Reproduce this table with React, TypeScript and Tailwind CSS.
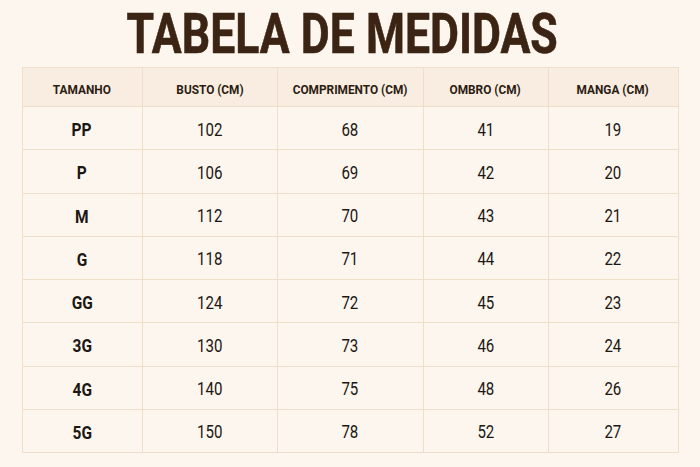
import React from "react";

const rows = [
  ["PP", "102", "68", "41", "19"],
  ["P", "106", "69", "42", "20"],
  ["M", "112", "70", "43", "21"],
  ["G", "118", "71", "44", "22"],
  ["GG", "124", "72", "45", "23"],
  ["3G", "130", "73", "46", "24"],
  ["4G", "140", "75", "48", "26"],
  ["5G", "150", "78", "52", "27"],
];

const heads = ["TAMANHO", "BUSTO (CM)", "COMPRIMENTO (CM)", "OMBRO (CM)", "MANGA (CM)"];

export default function App() {
  return (
    <div
      className="w-[700px] h-[467px] bg-[#fcf6ee] flex flex-col items-center overflow-hidden"
      style={{ fontFamily: 'Roboto, "Liberation Sans", sans-serif' }}
    >
      <div className="h-[67px] pt-[4px] pr-[15px] w-full flex justify-center">
        <h1 className="inline-block scale-x-[0.81] text-[55px] leading-[60px] font-bold text-[#3b2413] whitespace-nowrap [-webkit-text-stroke:0.6px_#3b2413]">
          TABELA DE MEDIDAS
        </h1>
      </div>
      <table className="w-[656px] border-collapse table-fixed">
        <colgroup>
          <col className="w-[120px]" />
          <col className="w-[135px]" />
          <col className="w-[146px]" />
          <col className="w-[125px]" />
          <col className="w-[130px]" />
        </colgroup>
        <thead>
          <tr className="h-[39px] bg-[#f9ece0]">
            {heads.map((h) => (
              <th key={h} className="border border-[#efdfca] text-center px-0 pt-[3px] pb-0 whitespace-nowrap">
                <span className="inline-block scale-x-[0.91] text-[13px] font-bold text-[#2b1d12]">{h}</span>
              </th>
            ))}
          </tr>
        </thead>
        <tbody>
          {rows.map((r) => (
            <tr key={r[0]} className="h-[43.25px]">
              {r.map((c, i) => (
                <td key={i} className="border border-[#efdfca] text-center px-0 pt-[3px] pb-0">
                  <span
                    className={`inline-block scale-x-[0.86] text-[#1c1713] ${i === 0 ? "font-bold text-[18px]" : "font-normal text-[17.5px]"}`}
                  >
                    {c}
                  </span>
                </td>
              ))}
            </tr>
          ))}
        </tbody>
      </table>
    </div>
  );
}
